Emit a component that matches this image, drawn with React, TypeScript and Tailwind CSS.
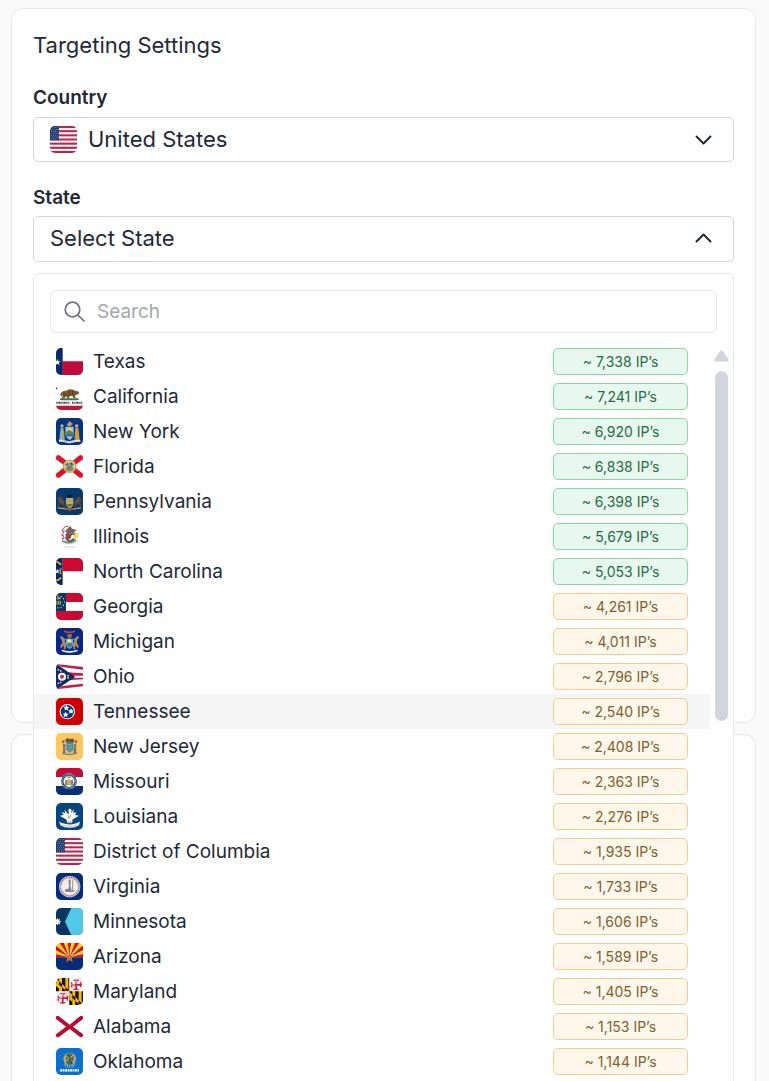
import React, { useState } from "react";

type FlagProps = { name: string };

function starPoints(cx: number, cy: number, r: number, points = 5, inner = 0.4) {
  const out: string[] = [];
  for (let i = 0; i < points * 2; i++) {
    const radius = i % 2 === 0 ? r : r * inner;
    const a = (Math.PI * i) / points - Math.PI / 2;
    out.push(`${(cx + radius * Math.cos(a)).toFixed(2)},${(cy + radius * Math.sin(a)).toFixed(2)}`);
  }
  return out.join(" ");
}

function Star({ x, y, r, fill = "#fff", n = 5, inner = 0.4 }: { x: number; y: number; r: number; fill?: string; n?: number; inner?: number }) {
  return <polygon points={starPoints(x, y, r, n, inner)} fill={fill} />;
}

function Usa() {
  const stripes = [0, 1, 2, 3, 4, 5, 6];
  const rows = [0, 1, 2, 3, 4, 5, 6];
  return (
    <>
      <rect width="81" height="81" fill="#fff" />
      {stripes.map((i) => (
        <rect key={i} y={i * 12.46} width="81" height="6.23" fill="#c0224a" />
      ))}
      <rect width="27" height="43" fill="#1d3b70" />
      {rows.map((r) =>
        [0, 1, 2, 3].map((c) => (
          <circle key={`${r}-${c}`} cx={4 + c * 6.4 + (r % 2 ? 2 : 0)} cy={4 + r * 5.8} r="1.3" fill="#dfe6f2" />
        )),
      )}
    </>
  );
}

function Rays() {
  const rays = Array.from({ length: 13 }, (_, i) => i);
  return (
    <>
      {rays.map((i) => {
        const a = Math.PI + (Math.PI * i) / 13;
        const b = Math.PI + (Math.PI * (i + 1)) / 13;
        return (
          <polygon
            key={i}
            points={`40.5,43 ${40.5 + 90 * Math.cos(a)},${43 + 90 * Math.sin(a)} ${40.5 + 90 * Math.cos(b)},${43 + 90 * Math.sin(b)}`}
            fill={i % 2 ? "#fcd116" : "#ce1126"}
          />
        );
      })}
    </>
  );
}

function Calvert() {
  return (
    <>
      <rect width="41" height="41" fill="#f6b911" />
      <path d="M0 0h9l0 10L0 2zM18 0h10v27L18 18zM37 0h4v40l-4-4z" fill="#111" />
      <path d="M0 12L9 20V41H0zM9 10l9 8V0h0v18L9 10zM18 28l10 9v4H18zM9 10v10l9 8V18zM28 27v10l9 4V36z" fill="#111" />
      <path d="M0 12l9 8v12l-9-8z" fill="#f6b911" />
    </>
  );
}

function Crossland() {
  return (
    <>
      <rect width="41" height="41" fill="#fff" />
      <path d="M20 0h21v20H20zM0 20h20v21H0z" fill="#c5203e" opacity="0.15" />
      <path d="M18 4h5v14h14v5H23v14h-5V23H4v-5h14z" fill="#c5203e" />
      <path d="M13 5h15v4H13zM13 32h15v4H13zM5 13h4v15H5zM32 13h4v15h-4z" fill="#c5203e" />
      <path d="M20.500 0v18M0 20.500h18" stroke="#fff" strokeWidth="2" />
    </>
  );
}

function FlagArt({ name }: FlagProps) {
  switch (name) {
    case "Texas":
      return (
        <>
          <rect width="81" height="81" fill="#fff" />
          <path d="M19 40h62v41H19z" fill="#c30b3b" />
          <path d="M0 0h20v81H0z" fill="#05296a" />
          <Star x={4} y={43} r={11} />
        </>
      );
    case "California":
      return (
        <>
          <rect width="81" height="81" fill="#fff" />
          <Star x={1} y={16} r={5} fill="#c8102e" />
          <path d="M13 37c1-10 8-14 18-14l9-4c8-1 14 2 18 5l8 1 4 4-3 5-7 1-3 4 2 6h-7l-3-6-8 1-2 6h-7l1-6-4 1-5 5h-7l3-6-1-4-3 5z" fill="#81552d" />
          <path d="M22 31l7 4-6 6M38 24l3 8-4 7M51 24l-2 8 6 5M59 30l4 2" stroke="#3f2c20" strokeWidth="2.500" fill="none" />
          <path d="M13 46h53l3 4-7 2H17l-6-2z" fill="#39764a" />
          <path d="M1 59h39M48 59h31" stroke="#37302c" strokeWidth="6" strokeDasharray="3 1.500 2 1" />
          <path d="M0 68h81v13H0z" fill="#bd1835" />
        </>
      );
    case "New York":
      return (
        <>
          <rect width="81" height="81" fill="#07357f" />
          <path d="M28 26h25v19c0 12-6 18-12 21-7-4-13-10-13-21z" fill="#9ebfd0" />
          <circle cx="41" cy="36" r="7" fill="#f1d16c" />
          <path d="M30 43l9-7 12 7v5H30z" fill="#56864c" />
          <path d="M31 52h20" stroke="#315e94" strokeWidth="6" />
          <path d="M32 20l7-8 3-4 2 5 7 5-8 7h-6z" fill="#b7a06d" />
          <circle cx="18" cy="24" r="5" fill="#d9aa77" />
          <path d="M14 30h8l5 35H10l2-20z" fill="#77b3cf" />
          <path d="M19 32l6 12-3 21h-6z" fill="#b9a54b" />
          <circle cx="62" cy="24" r="5" fill="#d6ad7d" />
          <path d="M58 30h9l4 35H55l2-20z" fill="#d69a3d" />
          <path d="M9 65c14-3 18 5 32 4 14-1 20-7 32-3v6c-16-2-20 4-33 4-12 0-15-6-31-4z" fill="#e8e8df" />
          <path d="M20 70l40 2" stroke="#72818f" strokeWidth="2" strokeDasharray="3 2" />
        </>
      );
    case "Florida":
      return (
        <>
          <rect width="81" height="81" fill="#fff" />
          <path d="M0 7h10l31 24L71 7h10v12L53 40l28 22v12H71L41 50 10 74H0V62l28-22L0 19z" fill="#d91729" />
          <circle cx="41" cy="40" r="20" fill="#e5a752" />
          <circle cx="41" cy="40" r="16" fill="#f8d99b" />
          <path d="M27 36c3-11 24-12 28 0l-4 7H30z" fill="#88bcc1" />
          <path d="M28 46c7-8 19-3 26-1-2 7-8 10-14 10-5 0-10-4-12-9z" fill="#5b9272" />
          <path d="M34 33l4 12M46 31l2 13M34 31l-5 5 8-2M47 29l-6 4 11 2" stroke="#5b7348" strokeWidth="3" />
          <circle cx="40" cy="42" r="5" fill="#d65846" />
          <circle cx="41" cy="40" r="18" fill="none" stroke="#a5683d" strokeWidth="2" strokeDasharray="2 3" />
        </>
      );
    case "Pennsylvania":
      return (
        <>
          <rect width="81" height="81" fill="#06396d" />
          <path d="M5 33l6-9 8 5 4 8 7 4-5 5 4 12-6 1-6-11-7 3-2 11H3l3-18z" fill="#4e4247" />
          <path d="M76 33l-6-9-8 5-4 8-7 4 5 5-4 12 6 1 6-11 7 3 2 11h5l-3-18z" fill="#4e4247" />
          <path d="M12 35l10 10M69 35L58 46" stroke="#a66b4d" strokeWidth="3" />
          <path d="M30 30h22v16c0 9-7 13-11 16-6-4-11-8-11-16z" fill="#d3aa3c" />
          <path d="M32 33h18v7H32z" fill="#86acc5" />
          <path d="M32 48h18l-6 8h-7z" fill="#538048" />
          <path d="M31 18l9 4 9-4-3 11H36z" fill="#171e26" />
          <path d="M7 60l18 2 16 3 17-3 16-2" stroke="#b69b67" strokeWidth="4" fill="none" />
          <path d="M28 62l13 4 13-4" stroke="#b54a43" strokeWidth="4" fill="none" />
        </>
      );
    case "Illinois":
      return (
        <>
          <rect width="81" height="81" fill="#fff" />
          <path d="M18 52c12-8 38-8 50-1-5 10-12 13-24 13-10 0-20-4-26-12z" fill="#d9e7e5" />
          <circle cx="60" cy="38" r="8" fill="#f4d955" />
          <path d="M28 25l14-16 6 8 13 4-7 6 3 9-9-1-5 12-10-2-5-10 5-5z" fill="#685047" />
          <path d="M31 28l12-12M35 32l13-12M39 35l13-11M44 39l10-9" stroke="#b49b8e" strokeWidth="2" />
          <path d="M37 10c-12-1-15 5-19 14l7 1-8 12 7 2-6 9 7-2" stroke="#c33a4a" strokeWidth="3" fill="none" />
          <path d="M28 42l12 15 15-9" stroke="#4a4444" strokeWidth="5" fill="none" />
          <path d="M31 36l8 1 1 13h-8z" fill="#b83a50" />
          <path d="M18 54l16 5 13-1 12-7" stroke="#5c9862" strokeWidth="5" fill="none" />
          <path d="M26 72h31" stroke="#aaa9b7" strokeWidth="3" strokeDasharray="3 2" />
        </>
      );
    case "North Carolina":
      return (
        <>
          <rect width="81" height="81" fill="#fff" />
          <path d="M20 0h61v40H20z" fill="#cc0a2f" />
          <path d="M0 0h20v81H0z" fill="#052b62" />
          <path d="M0 13c5-4 7 1 15 7M0 66c5 3 8-1 15-7" stroke="#e8be38" strokeWidth="5" fill="none" />
          <Star x={4} y={40} r={8} />
          <path d="M11 33h6M11 47h6M13 34v12" stroke="#e8be38" strokeWidth="3" />
        </>
      );
    case "Georgia":
      return (
        <>
          <rect width="81" height="81" fill="#c80b31" />
          <path d="M29 27h52v27H29z" fill="#fff" />
          <path d="M0 0h30v54H0z" fill="#073763" />
          {Array.from({ length: 11 }, (_, i) => {
            const a = (i * Math.PI * 2) / 11;
            return <Star key={i} x={8 + 17 * Math.cos(a)} y={27 + 18 * Math.sin(a)} r={3} />;
          })}
          <path d="M1 23h14v12H1zM2 15l6-4 6 4v4H2z" fill="#bea74c" />
          <path d="M5 21v14M11 21v14" stroke="#073763" strokeWidth="2" />
        </>
      );
    case "Michigan":
      return (
        <>
          <rect width="81" height="81" fill="#062784" />
          <path d="M24 7c14 5 20 5 33 0v5c-11 5-22 5-33 0z" fill="#d3394c" />
          <path d="M33 19h16l-4 11h-9z" fill="#9b713f" />
          <path d="M18 24l5 6 6 3-3 7 5 8-3 16h-5l1-13-8 9-4-3 7-14-2-8-6-8zM63 24l-5 6-6 3 3 7-5 8 3 16h5l-1-13 8 9 4-3-7-14 2-8 6-8z" fill="#b48c55" />
          <path d="M30 32h21v16c0 9-5 13-10 15-6-3-11-7-11-15z" fill="#67b7df" />
          <circle cx="40" cy="39" r="6" fill="#f5e38b" />
          <path d="M31 49l10-6 9 6-5 9h-8z" fill="#477a76" />
          <path d="M19 65c14 5 29 5 44 0l3 4c-17 7-33 7-50 0z" fill="#e7eaf0" />
        </>
      );
    case "Ohio":
      return (
        <>
          <path d="M0 3l81 10v56L0 79z" fill="#fff" />
          <path d="M0 3l81 9v8L18 12zM0 79l81-9v-8L18 69zM25 25l56 6v7H48zM48 44h33v7l-56 6z" fill="#ca1947" />
          <path d="M21 19l60 5v7l-45-3zM36 52l45-3v8L22 63z" fill="#fff" />
          <path d="M0 2l58 39L0 80z" fill="#102c61" />
          <circle cx="18" cy="41" r="12" fill="#fff" />
          <circle cx="18" cy="41" r="6" fill="#ce244a" />
          <Star x={7} y={20} r={4} /><Star x={14} y={24} r={4} /><Star x={7} y={61} r={4} />
          <Star x={14} y={58} r={4} /><Star x={36} y={38} r={4} /><Star x={36} y={45} r={4} />
        </>
      );
    case "Tennessee":
      return (
        <>
          <rect width="81" height="81" fill="#d00000" />
          <circle cx="34" cy="41" r="23" fill="#fff" />
          <circle cx="34" cy="41" r="20" fill="#073477" />
          <Star x={31} y={30} r={9} inner={0.5} /><Star x={45} y={40} r={9} inner={0.5} /><Star x={29} y={50} r={9} inner={0.5} />
        </>
      );
    case "New Jersey":
      return (
        <>
          <rect width="81" height="81" fill="#fcc761" />
          <path d="M27 20l9-5 5 4 9-3 6 8-7 7H33z" fill="#70513d" />
          <path d="M31 28h21v22l-11 10-10-10z" fill="#368bb5" />
          <path d="M35 35h13M35 43h13M37 51h9" stroke="#b7a160" strokeWidth="3" />
          <circle cx="22" cy="26" r="4" fill="#8a6350" /><circle cx="60" cy="26" r="4" fill="#8a6350" />
          <path d="M20 31l7 3 2 27h-9l2-13z" fill="#aa654b" />
          <path d="M61 31l-7 3-2 27h10l-2-13z" fill="#a16c4a" />
          <path d="M28 35l-5 15M55 35l5 15" stroke="#538ca1" strokeWidth="4" />
          <path d="M19 61l17 3h10l17-4" stroke="#508aaa" strokeWidth="4" fill="none" />
        </>
      );
    case "Missouri":
      return (
        <>
          <rect width="81" height="81" fill="#fff" />
          <path d="M0 0h81v27H0z" fill="#c60b37" /><path d="M0 54h81v27H0z" fill="#052f74" />
          <circle cx="39" cy="40" r="24" fill="#edf3f4" />
          <circle cx="39" cy="40" r="20" fill="none" stroke="#174f83" strokeWidth="7" />
          <circle cx="39" cy="40" r="20" fill="none" stroke="#fff" strokeWidth="3" strokeDasharray="2 4" />
          <circle cx="39" cy="41" r="15" fill="#fff" />
          <path d="M29 34l6 4v12l-9 1zM50 34l-7 4v12l10 1z" fill="#a57741" />
          <circle cx="39" cy="41" r="7" fill="#b9ae8c" />
          <path d="M27 53c8-4 16-4 24 0" stroke="#b6954c" strokeWidth="3" fill="none" />
          <path d="M33 31h12l-2-6h-8z" fill="#bb9448" />
        </>
      );
    case "Louisiana":
      return (
        <>
          <rect width="81" height="81" fill="#07457d" />
          <path d="M35 52L11 38l12-2-6-9 11 4-3-11 10 11 3 8zM46 52l23-14-12-2 4-9-9 4 1-13-8 13-2 8z" fill="#fff" />
          <path d="M37 22c0-6 8-7 9-1l-1 8 4 12-1 14H34l-1-13 6-13z" fill="#fff" />
          <path d="M44 20l5 5-5 1M36 37l3 10 5-11" stroke="#c7a45d" strokeWidth="3" fill="none" />
          <path d="M31 52h20l-3 9H34z" fill="#c6a983" />
          <path d="M34 57l2-7 4 7 4-8 3 8" stroke="#fff" strokeWidth="3" fill="none" />
          <path d="M9 55c6 5 10 6 18 7 9 3 20 3 28 0 8-1 12-3 17-7l-3 12c-16 10-40 10-56 0z" fill="#f7f7f4" />
          <path d="M20 66c11 5 29 5 42 0" stroke="#6b8faf" strokeWidth="2" strokeDasharray="4 2" fill="none" />
        </>
      );
    case "Virginia":
      return (
        <>
          <rect width="81" height="81" fill="#052b80" />
          <circle cx="41" cy="41" r="32" fill="#e5ded8" />
          <circle cx="41" cy="41" r="28" fill="none" stroke="#8e7272" strokeWidth="5" strokeDasharray="3 2" />
          <circle cx="41" cy="41" r="24" fill="#f4f1ed" />
          <circle cx="41" cy="23" r="4" fill="#aa8469" />
          <path d="M38 27h6l-1 12 4 13H36l3-13z" fill="#6788b5" />
          <path d="M50 20v34" stroke="#6d675f" strokeWidth="2" />
          <path d="M25 51l9-4 15 6 9-2-5 6H30z" fill="#957d87" />
        </>
      );
    case "Minnesota":
      return (
        <>
          <rect width="81" height="81" fill="#063661" />
          <path d="M46 0h35v81H46L27 41z" fill="#51c8e8" />
          <Star x={4} y={41} r={12} n={8} inner={0.55} />
        </>
      );
    case "Arizona":
      return (
        <>
          <Rays />
          <path d="M0 43h81v38H0z" fill="#052d77" />
          <Star x={40.5} y={44} r={17} fill="#d46a32" />
        </>
      );
    case "Maryland":
      return (
        <>
          <Calvert />
          <g transform="translate(40 0)"><Crossland /></g>
          <g transform="translate(0 40)"><Crossland /></g>
          <g transform="translate(40 40)"><Calvert /></g>
        </>
      );
    case "Alabama":
      return (
        <>
          <rect width="81" height="81" fill="#fff" />
          <path d="M0 9h8l33 26L73 9h8v9L51 41l30 23v9h-8L41 48 8 73H0v-9l30-23L0 18z" fill="#b80d30" />
        </>
      );
    case "Oklahoma":
      return (
        <>
          <rect width="81" height="81" fill="#0b71cc" />
          <circle cx="41" cy="33" r="19" fill="#bba978" />
          <path d="M29 22l12-8 12 8-1 21-11 10-11-9z" fill="#416e5c" />
          <path d="M27 42l27-22M30 23l24 21" stroke="#dfbe7a" strokeWidth="3" />
          <path d="M36 18l12 31" stroke="#563e2e" strokeWidth="4" />
          <path d="M26 46l3 10M33 49l1 10M41 51v8M49 49l-1 10M56 46l-3 10" stroke="#91b6be" strokeWidth="3" />
          <path d="M12 67h57" stroke="#fff" strokeWidth="7" strokeDasharray="6 1.500" />
        </>
      );
    default:
      return <Usa />;
  }
}

function Flag({ name }: FlagProps) {
  return (
    <svg viewBox="0 0 81 81" aria-hidden="true" className="size-[27px] shrink-0 overflow-hidden rounded-[5px]">
      <FlagArt name={name} />
    </svg>
  );
}

function Chevron({ up = false }: { up?: boolean }) {
  return (
    <svg viewBox="0 0 18 18" aria-hidden="true" className="pointer-events-none size-[18px] shrink-0" fill="none" stroke="#1f2937" strokeWidth="2" strokeLinecap="round" strokeLinejoin="round">
      <path d={up ? "M2.500 12.500L9.500 5.500l7 7" : "M2.500 5.500l7 7 7-7"} />
    </svg>
  );
}

const states: { name: string; ips: string; plenty?: boolean }[] = [
  { name: "Texas", ips: "7,338", plenty: true },
  { name: "California", ips: "7,241", plenty: true },
  { name: "New York", ips: "6,920", plenty: true },
  { name: "Florida", ips: "6,838", plenty: true },
  { name: "Pennsylvania", ips: "6,398", plenty: true },
  { name: "Illinois", ips: "5,679", plenty: true },
  { name: "North Carolina", ips: "5,053", plenty: true },
  { name: "Georgia", ips: "4,261" },
  { name: "Michigan", ips: "4,011" },
  { name: "Ohio", ips: "2,796" },
  { name: "Tennessee", ips: "2,540" },
  { name: "New Jersey", ips: "2,408" },
  { name: "Missouri", ips: "2,363" },
  { name: "Louisiana", ips: "2,276" },
  { name: "District of Columbia", ips: "1,935" },
  { name: "Virginia", ips: "1,733" },
  { name: "Minnesota", ips: "1,606" },
  { name: "Arizona", ips: "1,589" },
  { name: "Maryland", ips: "1,405" },
  { name: "Alabama", ips: "1,153" },
  { name: "Oklahoma", ips: "1,144" },
];

function StateMenu({ active, onPick }: { active: string; onPick: (name: string) => void }) {
  const [query, setQuery] = useState("");
  const shown = states.filter((s) => s.name.toLowerCase().includes(query.toLowerCase()));
  return (
    <div className="absolute inset-x-0 top-full z-10 mt-[11px] rounded-md border border-gray-200 bg-white pt-4 pb-4">
      <label className="mx-4 flex h-[43px] items-center gap-3 rounded-md border border-gray-200 px-[13px]">
        <svg viewBox="0 0 21 21" aria-hidden="true" className="size-[21px] shrink-0" fill="none" stroke="#6b7280" strokeWidth="1.700" strokeLinecap="round">
          <circle cx="8.500" cy="8.500" r="7.300" />
          <path d="M13.800 13.800l6.200 6.200" />
        </svg>
        <input
          type="text"
          aria-label="Search states"
          placeholder="Search"
          value={query}
          onChange={(e) => setQuery(e.target.value)}
          className="min-w-0 flex-1 bg-transparent text-[19px] leading-6 text-gray-800 outline-none placeholder:text-[#a3a7ae]"
        />
      </label>
      <div className="mt-[11px] flex">
        <ul role="listbox" aria-label="State" className="min-w-0 flex-1">
          {shown.map((s) => (
            <li
              key={s.name}
              role="option"
              aria-selected={s.name === active}
              onClick={() => onPick(s.name)}
              className={`flex h-[35px] cursor-pointer items-center px-[22px] ${s.name === active ? "bg-[#f5f5f6]" : ""}`}
            >
              <Flag name={s.name} />
              <span className="ml-[10px] flex-1 text-[19px] leading-6">{s.name}</span>
              <span
                className={`flex h-[27px] w-[135px] items-center justify-center rounded-[5px] border text-sm leading-5 ${
                  s.plenty ? "border-[#86d9a0] bg-[#e9f8ef] text-[#256b43]" : "border-[#f5cb8c] bg-[#fff7ec] text-[#80602b]"
                }`}
              >
                ~ {s.ips} IP’s
              </span>
            </li>
          ))}
        </ul>
        <div aria-hidden="true" className="flex w-[23px] flex-col items-center pt-[6px]">
          <svg viewBox="0 0 15 12" className="h-3 w-[15px]">
            <path d="M6 1.300Q7.500-.6 9 1.300l5.300 7.500Q15.500 11.500 13 11.500H2Q-.5 11.500.7 8.800z" fill="#d1d5db" />
          </svg>
          <div className="mt-[9px] h-[350px] w-[13px] rounded-full bg-gray-300" />
        </div>
      </div>
    </div>
  );
}

export default function App() {
  const [open, setOpen] = useState(true);
  const [active, setActive] = useState("Tennessee");
  return (
    <main className="flex h-screen flex-col gap-[11px] overflow-hidden bg-[#fafafa] pt-2 pr-[13px] pl-[11px] font-['Inter',sans-serif] text-gray-800">
      <section className="relative z-10 min-h-[715px] shrink-0 rounded-xl border border-gray-200 bg-white px-[21px] pt-5">
        <h1 className="text-[22px] leading-8">Targeting Settings</h1>

        <label htmlFor="country" className="mt-[25px] block text-[19px] leading-6 font-semibold">
          Country
        </label>
        <div className="relative mt-[7px] flex h-[45px] items-center rounded-[5px] border border-gray-300 pl-4">
          <Flag name="United States" />
          <select id="country" className="-ml-[27px] h-full min-w-0 flex-1 appearance-none bg-transparent pb-[2px] pl-[38px] text-[22px] leading-8 outline-none">
            <option>United States</option>
          </select>
          <span className="pointer-events-none absolute right-[21px]">
            <Chevron />
          </span>
        </div>

        <label htmlFor="state" className="mt-6 block text-[19px] leading-6 font-semibold">
          State
        </label>
        <div className="relative mt-[6px]">
          <button
            id="state"
            type="button"
            aria-haspopup="listbox"
            aria-expanded={open}
            onClick={() => setOpen(!open)}
            className="flex h-[46px] w-full items-center justify-between rounded-[5px] border border-gray-300 pr-[21px] pb-[2px] pl-4 text-[22px] leading-8"
          >
            Select State
            <Chevron up={open} />
          </button>
          {open && <StateMenu active={active} onPick={setActive} />}
        </div>
      </section>

      <section className="flex-1 rounded-t-xl border border-b-0 border-gray-200 bg-white" />
    </main>
  );
}
